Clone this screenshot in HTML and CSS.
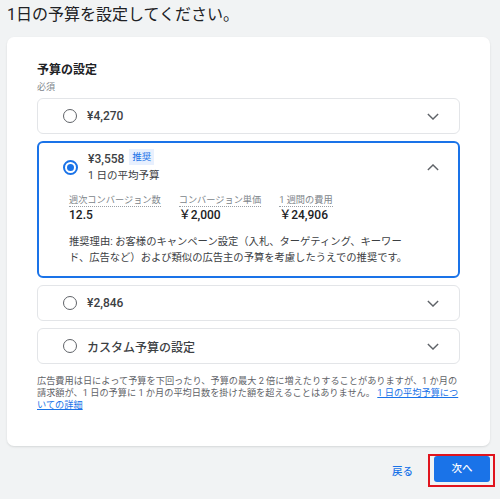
FILE: index.html
```html
<!DOCTYPE html>
<html lang="ja">
<head>
    <meta charset="UTF-8">
    <title>予算の設定</title>
    <link rel="stylesheet" href="styles.css">
</head>
<body>
    <h1 class="page-title">1日の予算を設定してください。</h1>

    <div class="card">
        <div class="section-title">予算の設定</div>
        <div class="required">必須</div>

        <div class="options">
            <!-- 選択肢 1 -->
            <div class="option">
                <span class="radio"></span>
                <span class="amount">¥4,270</span>
                <svg class="chevron" viewBox="0 0 14 8"><path d="M1 1l6 6 6-6"/></svg>
            </div>

            <!-- 選択中 -->
            <div class="option option-selected">
                <div class="option-head">
                    <span class="radio radio-on"></span>
                    <div class="amount-block">
                        <div class="amount-line"><span class="amount">¥3,558</span><span class="chip">推奨</span></div>
                        <div class="sub">1 日の平均予算</div>
                    </div>
                    <svg class="chevron" viewBox="0 0 14 8"><path d="M1 7l6-6 6 6"/></svg>
                </div>
                <div class="metrics">
                    <div class="metric">
                        <div class="metric-label">週次コンバージョン数</div>
                        <div class="metric-value">12.5</div>
                    </div>
                    <div class="metric">
                        <div class="metric-label">コンバージョン単価</div>
                        <div class="metric-value">￥2,000</div>
                    </div>
                    <div class="metric">
                        <div class="metric-label">1 週間の費用</div>
                        <div class="metric-value">￥24,906</div>
                    </div>
                </div>
                <div class="reason">
                    <div>推奨理由: お客様のキャンペーン設定（入札、ターゲティング、キーワー</div>
                    <div>ド、広告など）および類似の広告主の予算を考慮したうえでの推奨です。</div>
                </div>
            </div>

            <div class="option">
                <span class="radio"></span>
                <span class="amount">¥2,846</span>
                <svg class="chevron" viewBox="0 0 14 8"><path d="M1 1l6 6 6-6"/></svg>
            </div>

            <div class="option">
                <span class="radio"></span>
                <span class="amount">カスタム予算の設定</span>
                <svg class="chevron" viewBox="0 0 14 8"><path d="M1 1l6 6 6-6"/></svg>
            </div>
        </div>

        <p class="note">広告費用は日によって予算を下回ったり、予算の最大 2 倍に増えたりすることがありますが、1 か月の請求額が、1 日の予算に 1 か月の平均日数を掛けた額を超えることはありません。 <a href="#" class="link">1 日の平均予算についての詳細</a></p>
    </div>

    <div class="actions">
        <a href="#" class="btn-back">戻る</a>
        <span class="next-wrap"><a href="#" class="btn-next">次へ</a></span>
    </div>
</body>
</html>
```

FILE: styles.css
```css
/* 全体 */
body {
    margin: 0;
    padding: 0 10px 0 7px;
    background-color: #f1f3f4;
    font-family: Roboto, "Noto Sans CJK JP", sans-serif;
    color: #3c4043;
}
.page-title {
    margin: 0;
    padding: 4px 0 0 0;
    font-size: 16px;
    font-weight: 400;
    line-height: 22px;
    color: #202124;
}
/* カード */
.card {
    margin-top: 11px;
    background: #fff;
    border-radius: 7px;
    box-shadow: 0 1px 2px rgba(60, 64, 67, 0.15);
    padding: 25px 30px 35px 30px;
}
.section-title {
    font-size: 12px;
    font-weight: 700;
    line-height: 16px;
    color: #202124;
}
.required {
    margin-top: 1px;
    font-size: 9px;
    line-height: 16px;
    color: #80868b;
}
.options {
    display: flex;
    flex-direction: column;
    gap: 7px;
    margin-top: 3px;
}
/* 選択肢 */
.option {
    border: 1px solid #e3e5e8;
    border-radius: 6px;
    height: 34px;
    display: flex;
    align-items: center;
    padding: 0 20px 0 25px;
    gap: 10px;
}
.option-selected {
    height: auto;
    display: block;
    border: 2px solid #1a73e8;
    padding: 6px 19px 11px 24px;
}
.option-head {
    display: flex;
    align-items: center;
    gap: 10px;
}
.radio {
    width: 12px;
    height: 12px;
    border: 1.6px solid #5f6368;
    border-radius: 50%;
    flex-shrink: 0;
    position: relative;
}
.radio-on {
    border: 2px solid #1a73e8;
    width: 11px;
    height: 11px;
}
.radio-on::after {
    content: "";
    position: absolute;
    left: 2px;
    top: 2px;
    width: 7px;
    height: 7px;
    border-radius: 50%;
    background: #1a73e8;
}
.amount {
    flex: 1;
    font-size: 12px;
    font-weight: 500;
    color: #3c4043;
}
.amount-block {
    flex: 1;
}
.amount-line {
    height: 18px;
    line-height: 18px;
}
.chip {
    display: inline-block;
    margin-left: 5px;
    padding: 0 3px;
    font-size: 9.5px;
    line-height: 16px;
    background: #e8f0fe;
    color: #1a73e8;
    vertical-align: top;
}
.sub {
    font-size: 10.5px;
    line-height: 18px;
    color: #3c4043;
}
.chevron {
    width: 12px;
    height: 7px;
    fill: none;
    stroke: #5f6368;
    stroke-width: 1.6;
    flex-shrink: 0;
}
/* 指標 */
.metrics {
    display: flex;
    gap: 18px;
    margin-top: 3px;
    padding-left: 6px;
}
.metric-label {
    display: inline-block;
    font-size: 9.2px;
    line-height: 12px;
    color: #80868b;
    border-bottom: 1px dotted #9aa0a6;
}
.metric-value {
    font-size: 12px;
    line-height: 17px;
    font-weight: 500;
    color: #202124;
}
.reason {
    margin: 10px 0 0 6px;
    font-size: 10.3px;
    line-height: 15.5px;
    color: #3c4043;
}
/* 注記 */
.note {
    margin: 11px 0 0 0;
    font-size: 9.2px;
    line-height: 12px;
    color: #5f6368;
}
.link {
    color: #1a73e8;
}
/* ボタン */
.actions {
    display: flex;
    justify-content: flex-end;
    align-items: center;
    gap: 15px;
    margin-top: 8px;
    margin-right: -5px;
}
.btn-back {
    font-size: 10.5px;
    font-weight: 500;
    color: #1a73e8;
    text-decoration: none;
}
.next-wrap {
    border: 2px solid #e0141e;
    padding: 0 3px 3px 4px;
}
.btn-next {
    display: block;
    width: 56px;
    height: 26px;
    line-height: 26px;
    text-align: center;
    background: #1a73e8;
    border-radius: 3px;
    color: #fff;
    font-size: 10.5px;
    font-weight: 500;
    text-decoration: none;
}
```
